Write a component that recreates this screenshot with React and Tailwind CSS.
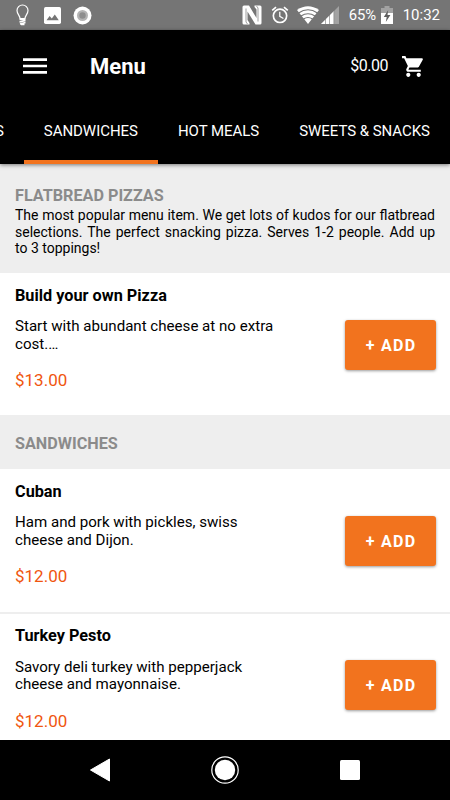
import React from 'react';

const tabs = ['SALADS', 'SANDWICHES', 'HOT MEALS', 'SWEETS & SNACKS'];

const sections = [
    {
        title: 'FLATBREAD PIZZAS',
        description: [
            'The most popular menu item. We get lots of kudos for our flatbread',
            'selections. The perfect snacking pizza. Serves 1-2 people. Add up',
            'to 3 toppings!',
        ],
        items: [
            { name: 'Build your own Pizza', lines: ['Start with abundant cheese at no extra', 'cost.…'], price: '$13.00' },
        ],
    },
    {
        title: 'SANDWICHES',
        items: [
            { name: 'Cuban', lines: ['Ham and pork with pickles, swiss', 'cheese and Dijon.'], price: '$12.00' },
            { name: 'Turkey Pesto', lines: ['Savory deli turkey with pepperjack', 'cheese and mayonnaise.'], price: '$12.00' },
        ],
    },
];

const StatusBar = () => (
    <div className="flex h-[30px] shrink-0 items-center bg-[#757575] text-[15px] text-white">
        <svg className="ml-4 h-[22px] w-[13px]" viewBox="0 0 13 22" fill="none" stroke="currentColor" strokeWidth="1.2">
            <path d="M4 14.500C4 11.500 1 10 1 6.500a5.500 5.500 0 0 1 11 0C12 10 9 11.500 9 14.500z" />
            <path d="M3.500 15.500h6M3.500 18l6-1.500M4 20l5.500-1.500M5 20.500h3.500" strokeWidth="1.400" />
        </svg>
        <svg className="ml-[15px] h-[17px] w-[17px]" viewBox="0 0 17 17">
            <rect width="17" height="17" rx="1.700" fill="#fff" />
            <path d="M2.500 13.200 5.600 9l2.200 2.600L10.800 7.600l4 5.600z" fill="#757575" />
        </svg>
        <svg className="ml-3 h-[19px] w-[19px]" viewBox="0 0 19 19">
            <circle cx="9.500" cy="9.500" r="9" fill="#fff" />
            <circle cx="9.500" cy="9.500" r="5.500" fill="#b4b4b4" />
            <circle cx="9.500" cy="9.500" r="3.200" fill="#8e8e8e" />
        </svg>
        <svg className="ml-auto h-5 w-5" viewBox="0 0 20 20" fill="#fff">
            <path d="M2 .5h5L14.500 13V4.500L12.500 2V.5H18q1.500 0 1.500 1.500v16q0 1.500-1.500 1.500h-4.500L5.500 6.500V15l2 3v1.500H2Q.5 19.500.5 18V2Q.5.5 2 .5z" />
            <path d="M4 3.500V17L5.500 19M16 16.500V3L14.500 1" fill="none" stroke="#757575" strokeWidth=".7" />
        </svg>
        <svg className="ml-2 h-5 w-5" viewBox="0 0 24 24" fill="currentColor">
            <path d="m22 5.720-4.600-3.860-1.290 1.530 4.600 3.860zM7.880 3.390 6.600 1.860 2 5.710l1.290 1.530zM12.500 8H11v6l4.750 2.850.75-1.230-4-2.370zM12 4a9 9 0 1 0 0 18 9 9 0 0 0 0-18zm0 16a7 7 0 1 1 0-14 7 7 0 0 1 0 14z" />
        </svg>
        <svg className="ml-[7px] h-[18px] w-[22px]" viewBox="0 0 22 18">
            <path d="M0 4Q11-3.500 22 4L11 18z" fill="#fff" />
            <path d="M1.500 7Q11 .5 20.500 7M4 10Q11 5.500 18 10M6.500 13Q11 10 15.500 13" fill="none" stroke="#757575" strokeWidth="1.200" />
        </svg>
        <svg className="ml-[2px] h-[18px] w-[18px]" viewBox="0 0 18 18">
            <path d="M0 18 18 0v18z" fill="#a2a2a2" />
            <path d="M0 18 13 5v13z" fill="#fff" />
            <path d="M4.500 12v6M8.500 8v10M12.800 4v14" stroke="#757575" strokeWidth=".6" />
        </svg>
        <span className="ml-[10px] w-[32px] pt-px text-[14.800px]">65%</span>
        <svg className="h-[18px] w-3" viewBox="0 0 12 18">
            <path d="M3.500 0h5v2H12v5H0V2h3.500z" fill="#a2a2a2" />
            <path d="M0 7h12v11H0z" fill="#fff" />
            <path d="M7.200 4 2.800 11h2.900L4.800 16 9.400 9H6.500z" fill="#606060" />
        </svg>
        <span className="mr-[10px] ml-[10px] pt-px">10:32</span>
    </div>
);

const Header = () => (
    <header className="z-10 shrink-0 bg-black text-white shadow-[0_1px_4px_rgba(0,0,0,0.5)]">
        <div className="flex h-[72px] items-center pl-[23px]">
            <svg className="h-4 w-6" viewBox="0 0 24 16" stroke="#fff" strokeWidth="2.600">
                <path d="M0 1.600h24M0 8h24M0 14.400h24" />
            </svg>
            <h1 className="ml-[43px] pt-px text-[22px] leading-6 font-bold">Menu</h1>
            <span className="ml-auto text-[16px] tracking-[-0.500px]">$0.00</span>
            <svg className="mr-6 ml-[13px] h-[25px] w-[25px]" viewBox="0 0 24 24" fill="currentColor">
                <path d="M7 18c-1.100 0-1.990.9-1.990 2S5.900 22 7 22s2-.9 2-2-.9-2-2-2zM1 2v2h2l3.600 7.590-1.350 2.450c-.16.280-.25.610-.25.960 0 1.100.9 2 2 2h12v-2H7.420c-.14 0-.25-.11-.25-.25l.03-.12.9-1.630h7.450c.75 0 1.410-.41 1.750-1.030l3.580-6.490A1 1 0 0 0 20 4H5.210l-.94-2zm16 16c-1.100 0-1.990.9-1.990 2s.89 2 1.990 2 2-.9 2-2-.9-2-2-2z" />
            </svg>
        </div>
        <nav className="flex h-[62px] justify-end overflow-hidden text-[15px] tracking-[-0.040px] whitespace-nowrap">
            {tabs.map((tab) => (
                <div
                    key={tab}
                    className={`flex shrink-0 items-center border-b-4 px-5 ${tab === 'SANDWICHES' ? 'border-[#f2731e]' : 'border-black'}`}
                >
                    {tab}
                </div>
            ))}
        </nav>
    </header>
);

const MenuItem = ({ item }) => (
    <div className="flex h-[144.200px] shrink-0 justify-between border-b-2 border-[#eee] pt-[12.500px] pr-[14px] pl-[15px]">
        <div className="whitespace-nowrap">
            <h3 className="text-[16.250px] leading-5 font-bold">{item.name}</h3>
            <p className="mt-[12.500px] text-[15.100px] leading-[17.500px]">
                {item.lines.map((line) => (
                    <span key={line} className="block">{line}</span>
                ))}
            </p>
            <p className="mt-[17px] text-[17px] leading-5 text-[#f0560f]">{item.price}</p>
        </div>
        <button className="mt-[34.200px] h-[50px] w-[91px] rounded-[3px] bg-[#f2731e] pt-[2px] pl-px text-[16px] font-bold tracking-[1.300px] text-white shadow-[0_1px_3px_rgba(0,0,0,0.4)]">
            + ADD
        </button>
    </div>
);

const Section = ({ section }) => (
    <>
        <div className={`shrink-0 bg-[#eee] px-[15px] ${section.description ? 'h-[109px] pt-[21.500px]' : 'h-[52.200px] pt-[17px]'}`}>
            <h2 className="text-[16.200px] leading-5 font-bold text-[#8b8b8b]">{section.title}</h2>
            {section.description && (
                <p className="mt-[1.500px] text-[14px] leading-[16.700px]">
                    {section.description.map((line, i) => (
                        <span
                            key={line}
                            className={`block whitespace-nowrap ${i < section.description.length - 1 ? '[text-align-last:justify]' : ''}`}
                        >
                            {line}
                        </span>
                    ))}
                </p>
            )}
        </div>
        {section.items.map((item) => (
            <MenuItem key={item.name} item={item} />
        ))}
    </>
);

const NavigationBar = () => (
    <div className="flex h-[60px] shrink-0 items-center justify-between bg-black pr-[90px] pl-[89px]">
        <svg className="h-6 w-[22px]" viewBox="0 0 22 24">
            <path d="M1.500 12 20.500 1v22z" fill="#fff" stroke="#fff" strokeLinejoin="round" />
        </svg>
        <svg className="mr-[2px] h-7 w-7" viewBox="0 0 28 28">
            <circle cx="14" cy="14" r="13.200" fill="none" stroke="#fff" strokeWidth="1.200" />
            <circle cx="14" cy="14" r="10.200" fill="#fff" />
        </svg>
        <div className="h-5 w-5 rounded-[1.500px] bg-white" />
    </div>
);

const App = () => (
    <div className="flex h-[800px] w-[450px] flex-col overflow-hidden bg-white font-[Roboto,sans-serif] text-black">
        <StatusBar />
        <Header />
        <main className="flex min-h-0 flex-1 flex-col overflow-hidden">
            {sections.map((section) => (
                <Section key={section.title} section={section} />
            ))}
        </main>
        <NavigationBar />
    </div>
);

export default App;
